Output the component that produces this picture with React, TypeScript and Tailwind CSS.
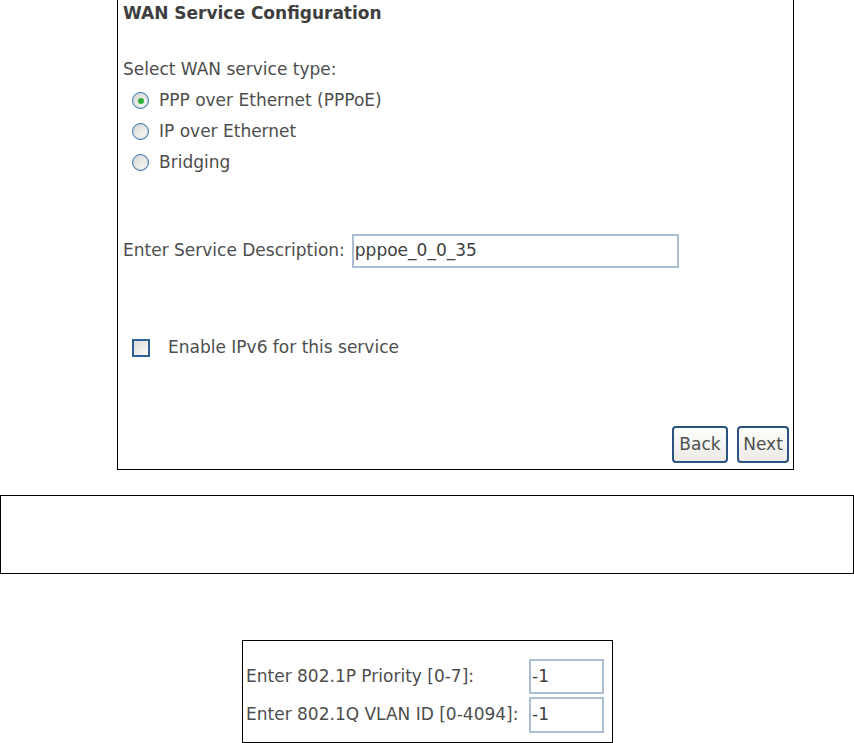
import React from "react";

function Radio({ checked }: { checked?: boolean }) {
  return (
    <span className="flex h-[17px] w-[17px] items-center justify-center rounded-full border-[1.5px] border-[#3a6ea5] bg-gradient-to-br from-[#d8d8d2] to-[#fbfbf9] shadow-[inset_0_0_0_1px_#c9d7e6]">
      {checked ? <span className="h-[6px] w-[6px] rounded-full bg-[#2fb13a]" /> : null}
    </span>
  );
}

export default function App() {
  const font = { fontFamily: '"DejaVu Sans", Tahoma, sans-serif' };
  return (
    <div className="relative h-[743px] w-[854px] overflow-hidden bg-white text-[17px] text-[#4d4d4d]" style={font}>
      {/* Box 1 */}
      <div className="ml-[117px] flex w-[677px] flex-col border-x border-b border-black pb-[6px] pl-[5px] pr-[4px]">
        <div className="flex h-[28px] items-center text-[17px] font-bold text-[#3e3e3e]">WAN Service Configuration</div>
        <div className="mt-[30px] flex h-[24px] items-center">Select WAN service type:</div>
        <div className="mt-[3px] flex flex-col">
          {[
            { l: "PPP over Ethernet (PPPoE)", c: true },
            { l: "IP over Ethernet", c: false },
            { l: "Bridging", c: false },
          ].map((r) => (
            <div key={r.l} className="flex h-[31px] items-center">
              <span className="ml-[9px] mr-[10px]">
                <Radio checked={r.c} />
              </span>
              <span>{r.l}</span>
            </div>
          ))}
        </div>
        <div className="mt-[56px] flex h-[34px] items-center">
          <span>Enter Service Description:</span>
          <div className="ml-[7px] flex h-[34px] w-[327px] items-center border-2 border-[#a9bed3] pl-[1px] text-[#404040]">pppoe_0_0_35</div>
        </div>
        <div className="mt-[63px] flex h-[34px] items-center">
          <span className="ml-[9px] h-[18px] w-[18px] border-2 border-[#2f5f97] bg-gradient-to-br from-[#dcdcd6] to-[#fafaf8]" />
          <span className="ml-[18px]">Enable IPv6 for this service</span>
        </div>
        <div className="mt-[61px] flex justify-end gap-[9px]">
          <button className="flex h-[37px] w-[56px] items-center justify-center rounded-[4px] border-2 border-[#2c5282] bg-gradient-to-b from-[#fdfdfb] to-[#ecebe6] text-[17px] text-[#505050]" style={font}>
            Back
          </button>
          <button className="flex h-[37px] w-[52px] items-center justify-center rounded-[4px] border-2 border-[#2c5282] bg-gradient-to-b from-[#fdfdfb] to-[#ecebe6] text-[17px] text-[#505050]" style={font}>
            Next
          </button>
        </div>
      </div>

      {/* Box 2 */}
      <div className="mt-[25px] h-[79px] w-[854px] border border-black" />

      {/* Box 3 */}
      <div className="ml-[242px] mt-[66px] flex w-[371px] flex-col gap-[3px] border border-black pb-[9px] pl-[3px] pr-[8px] pt-[18px]">
        <div className="flex h-[35px] items-center justify-between">
          <span>Enter 802.1P Priority [0-7]:</span>
          <div className="flex h-[35px] w-[75px] items-center border-2 border-[#a9bed3] pl-[1px] text-[#404040]">-1</div>
        </div>
        <div className="flex h-[36px] items-center justify-between">
          <span>Enter 802.1Q VLAN ID [0-4094]:</span>
          <div className="flex h-[36px] w-[75px] items-center border-2 border-[#a9bed3] pl-[1px] text-[#404040]">-1</div>
        </div>
      </div>
    </div>
  );
}
